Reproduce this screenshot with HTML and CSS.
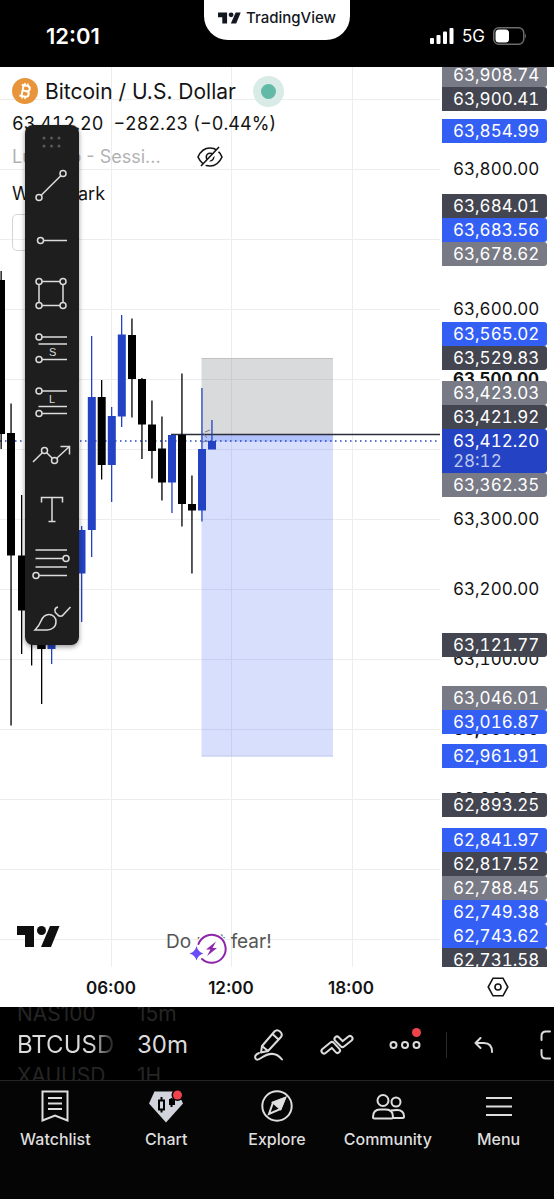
FILE: index.html
```html
<!DOCTYPE html>
<html lang="en">
  <head>
    <meta charset="UTF-8" />
    <meta name="viewport" content="width=device-width, initial-scale=1.0" />
    <title>BTCUSD chart</title>
    <link rel="stylesheet" href="styles.css">
  </head>

  <body>
    <header class="status">
      <span class="clock">12:01</span>
      <div class="notch">
        <svg width="23" height="12" viewBox="0 0 43 21" fill="#131722"><path d="M0 0h17v21H8V9H0z" /><circle cx="24.5" cy="4.5" r="4.5" /><path d="M33 0h9.5L34 21H24z" /></svg>
        <span>TradingView</span>
      </div>
      <div class="signal">
        <svg width="24" height="18" viewBox="0 0 24 18" fill="#fff">
          <rect x="0" y="11" width="4" height="6" rx="1" /><rect x="6.5" y="8" width="4" height="9" rx="1" />
          <rect x="13" y="4.500" width="4" height="12.500" rx="1" /><rect x="19.500" y="1" width="4" height="16" rx="1" />
        </svg>
        <span>5G</span>
        <svg width="34" height="18" viewBox="0 0 34 18">
          <rect x="0.750" y="0.750" width="30" height="16.500" rx="5" fill="none" stroke="#6b6b6b" stroke-width="1.500" />
          <rect x="2.500" y="2.500" width="13.500" height="13" rx="3.500" fill="#fff" />
          <path d="M32 6.500q2 2.500 0 5z" fill="#6b6b6b" />
        </svg>
      </div>
    </header>

    <main class="chart">
      <div class="plot">
        <svg class="candles" viewBox="0 67 440 900" preserveAspectRatio="xMinYMin meet">
          <!-- grid -->
          <path stroke="#ededee" stroke-width="1" d="M0 99.500H440M0 169.500H440M0 239.500H440M0 309.500H440M0 379.500H440M0 449.500H440M0 519.500H440M0 589.500H440M0 659.500H440M0 729.500H440M0 799.500H440M0 869.500H440M0 939.500H440M111.500 67V967M231.500 67V967M352.500 67V967" />
          <!-- short position -->
          <rect x="201.500" y="358.500" width="131.500" height="76" fill="#777a7c" opacity="0.280" />
          <rect x="201.500" y="434.500" width="131.500" height="322" fill="#3560f5" opacity="0.200" />
          <rect x="201.500" y="434.500" width="131.500" height="7" fill="#3560f5" opacity="0.220" />
          <path stroke="#bfc0c2" d="M201.500 358.500H333" />
          <path stroke="#c3cbef" d="M201.500 756H333" />
          <path stroke="#2b2e3a" stroke-width="1.300" d="M171 434.500H440" />
          <path stroke="#2443c4" stroke-width="1.500" stroke-dasharray="1.500 3.500" d="M0 441H440" />
          <path stroke="#777b88" fill="none" d="M203 433l4 5M205 432l5 -2M202 442l7 -1" />
          <!-- falling candles -->
          <g fill="#000">
            <path d="M-3 280h8v154h-8zM0.500 271h1.300v178h-1.300z" />
            <path d="M7 433h8v122.500h-8zM10.400 403.500h1.300v322h-1.300z" />
            <path d="M18 555.500h8v55h-8zM21 495h1.300v159h-1.300z" />
            <path d="M27.500 560h8v80h-8zM31 560h1.300v105.500h-1.300z" />
            <path d="M37.200 600h8.500v49h-8.500zM41 600h1.300v104h-1.300z" />
            <path d="M97.700 397h8v68h-8zM101 380h1.300v99.500h-1.300z" />
            <path d="M128 335h8v44h-8zM131.300 318.500h1.300v99h-1.300z" />
            <path d="M138 379h8v45.500h-8zM141.300 378h1.300v81h-1.300z" />
            <path d="M148 424.500h8v26.500h-8zM151.300 400.500h1.300v78h-1.300z" />
            <path d="M158 448.500h8v34h-8zM161.300 416.500h1.300v84h-1.300z" />
            <path d="M178 435h8v69h-8zM181.300 373.500h1.300v153h-1.300z" />
            <path d="M188 504h8v6.500h-8zM191.300 475.500h1.300v98h-1.300z" />
          </g>
          <!-- rising candles -->
          <g fill="#2443c4">
            <path d="M47.500 600h8v49h-8zM51 600h1.300v64h-1.300z" />
            <path d="M77.500 530h8v43.500h-8zM81 526h1.300v96h-1.300z" />
            <path d="M87.800 397h8v133h-8zM91 336h1.300v221h-1.300z" />
            <path d="M107.800 416h8v49h-8zM111 407h1.300v95h-1.300z" />
            <path d="M117.800 334.500h8v82h-8zM121 315h1.300v112h-1.300z" />
            <path d="M168 435h8v47.500h-8zM171.300 435h1.300v78h-1.300z" />
            <path d="M198 449h8v61.500h-8zM201.300 388h1.300v133.500h-1.300z" />
            <path d="M208 441h8v8.500h-8zM211.300 420h1.300v25h-1.300z" />
          </g>
        </svg>

        <div class="legend">
          <div class="pair">
            <svg width="26" height="26" viewBox="0 0 26 26"><circle cx="13" cy="13" r="13" fill="#e8943a" /><g fill="none" stroke="#fff" stroke-width="2" transform="rotate(12 13 13)"><path d="M8.500 7.500h6a2.700 2.700 0 0 1 0 5.400h-4M10.500 7.500v11M14.500 12.900a2.800 2.800 0 0 1 0 5.600H8.500" /><path d="M11.500 5v2.500M14.500 5v2.500M11.500 18.500v2.500M14.500 18.500v2.500" stroke-width="1.500" /></g></svg>
            <h1>Bitcoin / U.S. Dollar</h1>
            <span class="market"></span>
          </div>
          <p class="price"><span>63,412.20</span><span>−282.23 (−0.44%)</span></p>
          <div class="study hidden-study">
            <span>LuxAlgo - Sessi...</span>
            <svg width="26" height="22" viewBox="0 0 26 22" fill="none" stroke="#131313" stroke-width="1.600"><path d="M1 11Q5 2 13 2t12 9q-4 9 -12 9T1 11z" /><circle cx="13" cy="11" r="3.700" /><path stroke="#fff" stroke-width="3" d="M5 21L22.500 2.500" /><path d="M4 20L22 1" /></svg>
          </div>
          <div class="study">Watermark</div>
          <button class="collapse" aria-label="Collapse legend"></button>
        </div>

        <div class="toolbox">
          <svg class="grip" width="53" height="34" viewBox="0 0 53 34" fill="#5a5a5a"><circle cx="19" cy="13" r="1.500" /><circle cx="26.500" cy="13" r="1.500" /><circle cx="34" cy="13" r="1.500" /><circle cx="19" cy="21" r="1.500" /><circle cx="26.500" cy="21" r="1.500" /><circle cx="34" cy="21" r="1.500" /></svg>
          <button aria-label="Trend line"><svg viewBox="0 0 53 54"><circle cx="14" cy="38.500" r="3" /><circle cx="38" cy="14.500" r="3" /><path d="M16.200 36.300L35.800 16.700" /></svg></button>
          <button aria-label="Horizontal ray"><svg viewBox="0 0 53 54"><circle cx="15.500" cy="27.500" r="3" /><path d="M18.500 27.500H42" /></svg></button>
          <button aria-label="Rectangle"><svg viewBox="0 0 53 54"><circle cx="14" cy="14.500" r="3" /><circle cx="38" cy="14.500" r="3" /><circle cx="14" cy="38.500" r="3" /><circle cx="38" cy="38.500" r="3" /><path d="M17 14.500H35M17 38.500H35M14 17.500V35.500M38 17.500V35.500" /></svg></button>
          <button aria-label="Short position"><svg viewBox="0 0 53 54"><circle cx="14" cy="16" r="3" /><path d="M17 16H42M13.500 23H42M17 38.500H42" /><circle cx="14" cy="38.500" r="3" /><text x="24" y="35">S</text></svg></button>
          <button aria-label="Long position"><svg viewBox="0 0 53 54"><circle cx="14" cy="16" r="3" /><path d="M17 16H42M13.500 31.500H42M17 38.500H42" /><circle cx="14" cy="38.500" r="3" /><text x="24" y="28">L</text></svg></button>
          <button aria-label="Path"><svg viewBox="0 0 53 54"><circle cx="19.500" cy="21.500" r="3" /><circle cx="29.500" cy="31.500" r="3" /><path d="M8 33L17.300 23.700M21.700 23.700L27.300 29.300M31.700 29.300L44.500 17.500M35.500 17.500H44.500V25.500" /></svg></button>
          <button aria-label="Text"><svg viewBox="0 0 53 54"><path d="M16.500 19.500V14.500H37.500V19.500M27 14.500V38.500M23.500 38.500H30.500" /></svg></button>
          <button aria-label="Fib retracement"><svg viewBox="0 0 53 54"><path d="M10.500 13H42M10.500 21.500H38M10.500 30H42M14 38.500H42" /><circle cx="41" cy="21.500" r="3" /><circle cx="11" cy="38.500" r="3" /></svg></button>
          <button aria-label="Brush"><svg viewBox="0 0 53 54"><path d="M10 39Q14 35 16 30C18 25 21 23.500 24 23.500A7 7 0 0 1 31 30.500C31 36 27 39 22 39z" /><path d="M33 16C29 17 29 21 32 23C34 26 37 26 39 23L45.500 16" /></svg></button>
        </div>

        <svg class="logo" width="43" height="21" viewBox="0 0 43 21" fill="#0f0f0f"><path d="M0 0h17v21H8V9H0z" /><circle cx="24.500" cy="4.500" r="4.500" /><path d="M33 0h9.500L34 21H24z" /></svg>

        <div class="motto">
          <span>Do not fear!</span>
          <svg class="flash" width="40" height="34" viewBox="0 0 40 34"><circle cx="22.500" cy="17" r="16.500" fill="#fff" /><path d="M9.500 12A14 14 0 1 1 13 27" fill="none" stroke="#8e24aa" stroke-width="2" stroke-linecap="round" /><path d="M27 9.500L17 17.500h4.500L18 24l10 -8h-4.500z" fill="#8e24aa" /><path d="M7.500 14q1.500 6 7 7.500q-5.500 1.500 -7 7q-1.500 -5.500 -7 -7q5.500 -1.500 7 -7.500z" fill="#6a4df5" /></svg>
        </div>
      </div>

      <div class="scale">
        <ul class="ticks">
          <li></li>
          <li>63,800.00</li>
          <li></li>
          <li>63,600.00</li>
          <li class="major">63,500.00</li>
          <li></li>
          <li>63,300.00</li>
          <li>63,200.00</li>
          <li>63,100.00</li>
          <li class="major">63,000.00</li>
          <li>62,900.00</li>
        </ul>
        <div class="tags">
          <div><span class="grey">63,908.74</span><span class="dark">63,900.41</span></div>
          <div><span class="blue">63,854.99</span></div>
          <div><span class="dark">63,684.01</span><span class="blue">63,683.56</span><span class="grey">63,678.62</span></div>
          <div><span class="blue">63,565.02</span><span class="dark">63,529.83</span></div>
          <div><span class="grey">63,423.03</span><span class="dark">63,421.92</span><span class="last">63,412.20<small>28:12</small></span><span class="grey">63,362.35</span></div>
          <div><span class="dark">63,121.77</span></div>
          <div><span class="grey">63,046.01</span><span class="blue">63,016.87</span></div>
          <div><span class="blue">62,961.91</span></div>
          <div><span class="dark">62,893.25</span></div>
          <div class="bottom"><span class="blue">62,841.97</span><span class="dark">62,817.52</span><span class="grey">62,788.45</span><span class="blue">62,749.38</span><span class="blue">62,743.62</span><span class="dark">62,731.58</span></div>
        </div>
      </div>

      <div class="times"><span>06:00</span><span>12:00</span><span>18:00</span></div>
      <button class="settings" aria-label="Chart settings"><svg width="22" height="20" viewBox="0 0 22 20" fill="none" stroke="#131313" stroke-width="1.600"><path d="M6 1.200H16L20.800 10L16 18.800H6L1.200 10z" /><circle cx="11" cy="10" r="3" /></svg></button>
    </main>

    <section class="toolbar">
      <div class="wheel symbol"><span>NAS100</span><strong>BTCUSD</strong><span>XAUUSD</span></div>
      <div class="wheel interval"><span>15m</span><strong>30m</strong><span>1H</span></div>
      <div class="actions">
        <button aria-label="Draw"><svg width="30" height="34" viewBox="0 0 30 34"><path d="M8 18L20.500 3.500Q23 1 26 3.500T27 9L14 23L7 24.500zM8 18L14 23M18.500 6L24.500 11.500" /><path d="M5 25Q0 27 1.500 30.500Q3 33 7 30Q20 21 28 31.500" /></svg></button>
        <button class="indicators" aria-label="Indicators"><svg width="34" height="22" viewBox="0 0 34 22"><path d="M4 17L12 10.500L17.500 16.500" /><path class="inner" d="M4 17L12 10.500L17.500 16.500" /><path d="M17 5L22.500 10.500L30 4.500" /><path class="inner" d="M17 5L22.500 10.500L30 4.500" /></svg></button>
        <button class="more" aria-label="More"><svg width="32" height="10" viewBox="0 0 32 10"><circle cx="4.500" cy="5" r="3" /><circle cx="16" cy="5" r="3" /><circle cx="27.500" cy="5" r="3" /></svg><i class="dot"></i></button>
        <button class="undo" aria-label="Undo"><svg width="20" height="16" viewBox="0 0 20 16"><path d="M6.500 1L1.500 6L6.500 11M1.500 6H10Q18 6 18 15" /></svg></button>
        <button class="full" aria-label="Fullscreen"><svg width="32" height="30" viewBox="0 0 32 30"><path d="M1.500 10V6Q1.500 1.500 6 1.500H10M1.500 20V24Q1.500 28.500 6 28.500H10M22 1.500H26Q30.500 1.500 30.500 6V10M22 28.500H26Q30.500 28.500 30.500 24V20" /></svg></button>
      </div>
    </section>

    <nav class="tabs">
      <a href="#watchlist"><svg width="34" height="34" viewBox="0 0 34 34"><path d="M4.500 2.500H29.500V31.500L17 26.500L4.500 31.500zM10 9H24M10 14.500H24M10 20H24" /></svg>Watchlist</a>
      <a href="#chart" class="active"><svg width="36" height="34" viewBox="0 0 36 34"><path d="M6.500 2.500H29.500L35 14.500L18 33.500L1 14.500z" fill="#d1d4dc" stroke="none" /><path stroke="#000" stroke-width="2" d="M11 11.500H16V20.500H11zM13.500 8V11.500M13.500 20.500V23.500M23.500 9V18" /><path d="M21 10h6v6h-6z" fill="#000" stroke="none" /><circle cx="29.500" cy="6" r="6" fill="#050505" stroke="none" /><circle cx="29.500" cy="6" r="4.500" fill="#f0434c" stroke="none" /></svg>Chart</a>
      <a href="#explore"><svg width="34" height="34" viewBox="0 0 34 34"><circle cx="17" cy="17" r="14.700" /><path d="M25 9L20.500 20L9 25L13 13.500z" /><path d="M25 9L20.500 20L13 13.500z" fill="#e0e0e0" /></svg>Explore</a>
      <a href="#community"><svg width="34" height="34" viewBox="0 0 34 34"><circle cx="12" cy="11.500" r="5.500" /><circle cx="25" cy="13" r="4.500" /><path d="M2 28Q2 20.500 9 20.500H15Q22 20.500 22 28Q22 29.500 20.500 29.500H3.500Q2 29.500 2 28zM20 21.500Q22 21 26 21Q33 21 33 27.500Q33 29 31.500 29H22" /></svg>Community</a>
      <a href="#menu"><svg width="34" height="34" viewBox="0 0 34 34"><path d="M4 9H30M4 17.500H30M4 26H30" /></svg>Menu</a>
    </nav>
  </body>
</html>
```

FILE: styles.css
```css
* {
  box-sizing: border-box;
}

body {
  margin: 0;
  min-height: 100vh;
  display: flex;
  flex-direction: column;
  background-color: #000;
  color: #131313;
  font-family: Inter, "Liberation Sans", sans-serif;
}

button {
  padding: 0;
  border: none;
  background: none;
  cursor: pointer;
}

svg {
  display: block;
  flex-shrink: 0;
}

/* status bar */
.status {
  display: grid;
  grid-template-columns: 1fr 146px 1fr;
  height: 67px;
  color: #fff;
}

.clock {
  padding: 22px 0 0 46px;
  font-size: 22px;
  font-weight: 600;
  line-height: 28px;
}

.notch {
  display: flex;
  align-items: center;
  justify-content: center;
  gap: 5px;
  height: 40px;
  padding-bottom: 5px;
  border-radius: 0 0 24px 24px;
  background-color: #fff;
  color: #131722;
  font-size: 15px;
  font-weight: 500;
}

.signal {
  display: flex;
  align-items: center;
  justify-content: flex-end;
  gap: 8px;
  height: 72px;
  padding-right: 27px;
  font-size: 17px;
}

/* chart */
.chart {
  flex: 1;
  display: grid;
  grid-template-columns: 1fr 112px;
  grid-template-rows: 1fr 40px;
  background-color: #fff;
}

.plot {
  position: relative;
  overflow: hidden;
}

.candles {
  width: 440px;
  height: 900px;
}

.legend {
  position: absolute;
  top: 8px;
  left: 12px;
}

.pair {
  display: flex;
  align-items: center;
  gap: 7px;
  height: 32px;
}

.pair h1 {
  margin: 0;
  font-size: 21px;
  font-weight: 400;
}

.market {
  width: 31px;
  height: 31px;
  margin-left: 10px;
  border: 8px solid #d8ebe7;
  border-radius: 50%;
  background-color: #62b9a5;
}

.price {
  display: flex;
  gap: 10px;
  margin: 0;
  font-size: 18px;
  font-variant-numeric: tabular-nums;
  line-height: 34px;
}

.study {
  display: flex;
  align-items: center;
  height: 42px;
  font-size: 18px;
}

.hidden-study {
  gap: 36px;
  height: 31px;
  color: #b2b2b4;
}

.collapse {
  width: 37px;
  height: 37px;
  border: 1px solid #d5d5d8;
  border-radius: 5px;
}

.toolbox {
  position: absolute;
  top: 58px;
  left: 25px;
  width: 54px;
  border-radius: 8px;
  background-color: #1e1e1e;
  box-shadow: 0 2px 5px rgba(0, 0, 0, 0.4);
}

.toolbox button {
  display: block;
  width: 53px;
  height: 54px;
}

.toolbox button svg {
  width: 53px;
  height: 54px;
  fill: none;
  stroke: #dcdcdc;
  stroke-width: 1.5;
}

.toolbox text {
  fill: #dcdcdc;
  stroke: none;
  font-size: 11px;
}

.logo {
  position: absolute;
  bottom: 20px;
  left: 17px;
}

.motto {
  position: absolute;
  bottom: 13px;
  left: 166px;
  color: #555;
  font-size: 19px;
  line-height: 24px;
}

.flash {
  position: absolute;
  top: 2px;
  left: 23px;
}

/* price scale */
.scale {
  position: relative;
  overflow: hidden;
  height: 900px;
  font-size: 17px;
  font-variant-numeric: tabular-nums;
}

.ticks {
  margin: -3px 0 0;
  padding: 0 0 0 11px;
  list-style: none;
  line-height: 70px;
}

.ticks li {
  height: 70px;
}

.ticks .major {
  font-weight: 700;
}

.tags {
  position: absolute;
  inset: 0 7px 0 0;
  display: grid;
  grid-template-rows: 44px 32px 123px 104px 127px 160px 77px 34px 49px 1fr;
  color: #fff;
}

.tags div {
  display: flex;
  flex-direction: column;
  justify-content: flex-end;
  min-height: 0;
}

.tags .bottom {
  justify-content: flex-start;
  padding-top: 11px;
}

.tags span {
  flex-shrink: 0;
  height: 24px;
  padding-left: 11px;
  border-radius: 0 3px 3px 0;
  line-height: 24px;
}

.grey {
  background-color: #787a85;
}

.dark {
  background-color: #434550;
}

.blue {
  background-color: #345ff5;
}

.tags .last {
  height: 44px;
  background-color: #2443c4;
}

.last small {
  display: block;
  color: #bdc8ee;
  font-size: 17px;
  line-height: 16px;
}

.times {
  display: flex;
  padding-left: 51px;
  font-size: 17px;
  font-weight: 600;
  line-height: 42px;
  text-align: center;
}

.times span {
  width: 120px;
}

.settings {
  display: grid;
  place-items: center;
}

/* symbol and interval wheels */
.toolbar {
  display: flex;
  height: 74px;
  padding-top: 2px;
  overflow: hidden;
  border-bottom: 1px solid #242424;
  color: #dbdbdb;
}

.wheel {
  display: flex;
  flex-direction: column;
  justify-content: center;
  flex-shrink: 0;
}

.wheel span {
  color: #252525;
  font-size: 21px;
  line-height: 22px;
}

.wheel strong {
  font-size: 24px;
  font-weight: 400;
  line-height: 40px;
}

.symbol {
  width: 120px;
  padding-left: 17px;
}

.symbol strong {
  background: linear-gradient(90deg, #dbdbdb 74px, #222 96px);
  background-clip: text;
  color: transparent;
}

.interval {
  width: 80px;
  padding-left: 17px;
}

.actions {
  flex: 1;
  display: flex;
  justify-content: flex-end;
  margin-right: -33px;
}

.actions button {
  display: grid;
  place-items: center;
  flex-shrink: 0;
  width: 68px;
}

.actions svg {
  fill: none;
  stroke: #dbdbdb;
  stroke-width: 2;
  stroke-linecap: round;
  stroke-linejoin: round;
}

.actions .indicators svg {
  stroke-width: 7;
}

.indicators .inner {
  stroke: #000;
  stroke-width: 3;
}

.actions .more {
  position: relative;
}

.dot {
  position: absolute;
  top: 19px;
  right: 18px;
  width: 9px;
  height: 9px;
  border-radius: 50%;
  background-color: #f0434c;
}

.actions .undo {
  width: 86px;
  padding-left: 4px;
  background: linear-gradient(#2a2a2a, #2a2a2a) no-repeat 7px center / 1px 26px;
}

.actions .full {
  width: 62px;
}

/* bottom tabs */
.tabs {
  display: grid;
  grid-template-columns: repeat(5, 1fr);
  height: 118px;
  padding-top: 8px;
  background-color: #050505;
}

.tabs a {
  display: flex;
  flex-direction: column;
  align-items: center;
  gap: 5px;
  color: #dedede;
  font-size: 16px;
  font-weight: 500;
  line-height: 22px;
  text-decoration: none;
}

.tabs svg {
  fill: none;
  stroke: #dedede;
  stroke-width: 2;
}
```
